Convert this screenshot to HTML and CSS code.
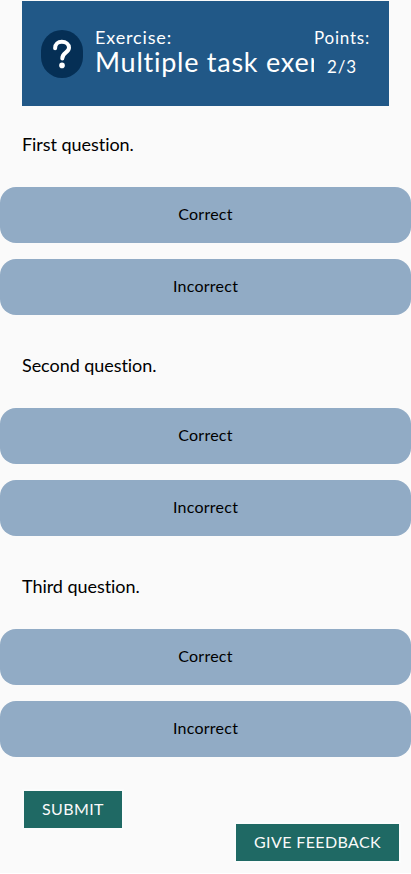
FILE: index.html
```html
<!DOCTYPE html>
<html lang="en">
<head>
<meta charset="utf-8">
<title>Multiple task exercise</title>
<link rel="stylesheet" href="styles.css">
</head>
<body>
<main class="page">
  <header class="header">
    <svg class="icon" viewBox="0 0 42 48">
      <rect width="42" height="48" rx="21" fill="#052f55"/>
      <path d="M14.1 18.2C14.1 14 17 11.8 20.8 11.8C25 11.8 28 14.2 28 17.8C28 22.6 21.3 22.2 21.3 28.4" fill="none" stroke="#fff" stroke-width="4" stroke-linecap="round" stroke-linejoin="round"/>
      <circle cx="21" cy="35.4" r="2.8" fill="#fff"/>
    </svg>
    <div class="heading">
      <div class="kind">Exercise:</div>
      <h1 class="title">Multiple task exercise</h1>
    </div>
    <div class="points"><span>Points:</span><span>2/3</span></div>
  </header>
  <section class="question">
    <h2 class="prompt">First question.</h2>
    <button class="option">Correct</button>
    <button class="option">Incorrect</button>
  </section>
  <section class="question">
    <h2 class="prompt">Second question.</h2>
    <button class="option">Correct</button>
    <button class="option">Incorrect</button>
  </section>
  <section class="question">
    <h2 class="prompt">Third question.</h2>
    <button class="option">Correct</button>
    <button class="option">Incorrect</button>
  </section>
  <footer class="actions">
    <button class="action">Submit</button>
    <button class="action feedback">Give feedback</button>
  </footer>
</main>
</body>
</html>
```
FILE: styles.css
```css
* { box-sizing: border-box; }
body { margin: 0; background: #fff; color: #000; font-family: Lato, sans-serif; font-variant-ligatures: none; }
.page { height: 873px; padding-top: 1px; background: #fafafa; overflow: hidden; }
.header { display: flex; height: 105px; margin: 0 22px; padding: 29px 17px 0 19px; background: #215887; color: #fff; }
.icon { width: 42px; height: 48px; flex: none; }
.heading { width: 219px; margin: -6px 0 0 12px; flex: none; overflow: hidden; white-space: nowrap; height: 66px; }
.kind { font-size: 18px; line-height: 22px; margin-top: 2px; letter-spacing: 0.85px; }
.title { margin: 0; font-size: 27px; line-height: 32px; margin-top: -2px; font-weight: 400; letter-spacing: 0.75px; }
.points { display: flex; flex-direction: column; align-items: center; flex: none; width: 56px; margin-top: -7px; font-size: 17px; line-height: 29px; letter-spacing: 0.8px; }
.question { display: flex; flex-direction: column; gap: 16px; height: 221px; padding-top: 24px; }
.prompt { height: 41px; margin: 0 22px; font-size: 18px; line-height: 29px; font-weight: 400; letter-spacing: -0.05px; }
.option { height: 56px; padding: 0 0 2px; border: 0; border-radius: 16px; background: #91abc5; color: #000; font: 16px/24px Lato, sans-serif; letter-spacing: 0.25px; }
.actions { display: flex; justify-content: space-between; align-items: flex-start; padding: 22px 12px 0 24px; }
.action { height: 37px; padding: 0 18px 2px; border: 0; background: #1f6964; color: #fafafa; font: 16px/24px Lato, sans-serif; letter-spacing: 0.38px; text-transform: uppercase; box-shadow: 0 0 0 2px #fbfcfc; }
.feedback { margin-top: 33px; }
```
